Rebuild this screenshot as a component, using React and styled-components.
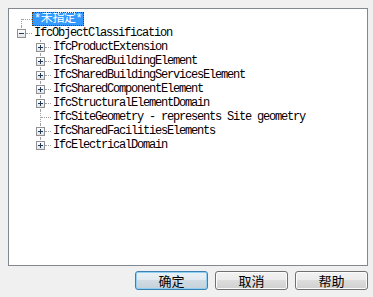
import React from 'react';
import styled, { createGlobalStyle } from 'styled-components';

const GlobalStyle = createGlobalStyle`
  html, body {
    margin: 0;
    padding: 0;
    background: #f0f0f0;
  }
`;

const Dialog = styled.div`
  width: 373px;
  height: 297px;
  box-sizing: border-box;
  padding: 8px 5px 0 8px;
  background: #f0f0f0;
  display: flex;
  flex-direction: column;
`;

const TreeBox = styled.div`
  width: 360px;
  height: 258px;
  box-sizing: border-box;
  border: 1px solid #828790;
  background: #fff;
  padding: 3px 0 0 4px;
  overflow: hidden;
`;

const Row = styled.div`
  display: flex;
  align-items: center;
  height: 14px;
`;

const Spacer = styled.span`
  width: 19px;
  height: 14px;
  flex-shrink: 0;
`;

const Joint = styled.span`
  position: relative;
  width: 19px;
  height: 14px;
  flex-shrink: 0;
`;

const Vert = styled.span`
  position: absolute;
  left: 8px;
  width: 0;
  border-left: 1px dotted #a0a0a0;
  top: ${(p) => (p.pos === 'first' ? '7px' : '0')};
  height: ${(p) => (p.pos === 'last' ? '8px' : p.pos === 'first' ? '7px' : '14px')};
`;

const Horiz = styled.span`
  position: absolute;
  top: 7px;
  left: ${(p) => (p.box ? '13px' : '9px')};
  right: 0;
  height: 0;
  border-top: 1px dotted #a0a0a0;
`;

const Expander = styled.span`
  position: absolute;
  left: 4px;
  top: 3px;
  width: 9px;
  height: 9px;
  box-sizing: border-box;
  border: 1px solid #919191;
  background: linear-gradient(#ffffff, #e4e4e4);
  z-index: 1;

  &::before {
    content: '';
    position: absolute;
    left: 1px;
    top: 3px;
    width: 5px;
    height: 1px;
    background: #1e395b;
  }

  &::after {
    content: '';
    display: ${(p) => (p.open ? 'none' : 'block')};
    position: absolute;
    left: 3px;
    top: 1px;
    width: 1px;
    height: 5px;
    background: #1e395b;
  }
`;

const Label = styled.span`
  height: 14px;
  line-height: 14px;
  padding: 0 2px;
  box-sizing: border-box;
  white-space: nowrap;
  font-family: "Liberation Mono", "Noto Sans CJK SC", monospace;
  font-size: 12px;
  letter-spacing: ${(p) => (p.selected ? '-0.4px' : '-1.2px')};
  color: ${(p) => (p.selected ? '#fff' : '#000')};
  background: ${(p) => (p.selected ? '#3399ff' : 'transparent')};
  outline: ${(p) => (p.selected ? '1px dotted #6b3a00' : 'none')};
  outline-offset: -1px;
`;

const ButtonBar = styled.div`
  display: flex;
  justify-content: flex-end;
  gap: 7px;
  margin-top: 5px;
`;

const Button = styled.button`
  width: 73px;
  height: 19px;
  padding: 0;
  box-sizing: border-box;
  border: 1px solid ${(p) => (p.primary ? '#3c7fb1' : '#707070')};
  border-radius: 3px;
  background: ${(p) =>
    p.primary
      ? 'linear-gradient(#eaf2f7 0%, #e0e9ef 50%, #d0dbe3 50%, #c5d1da 100%)'
      : 'linear-gradient(#f2f2f2 0%, #ebebeb 50%, #dddddd 50%, #cfcfcf 100%)'};
  box-shadow: inset 0 0 0 1px ${(p) => (p.primary ? '#8fd0f3' : '#fcfcfc')};
  font-family: "Noto Sans CJK SC", sans-serif;
  font-size: 13px;
  line-height: 15px;
  color: #000;
`;

const rows = [
  { level: 0, label: '*未指定*', pos: 'first', selected: true },
  { level: 0, label: 'IfcObjectClassification', pos: 'last', box: 'minus' },
  { level: 1, label: 'IfcProductExtension', pos: 'mid', box: 'plus' },
  { level: 1, label: 'IfcSharedBuildingElement', pos: 'mid', box: 'plus' },
  { level: 1, label: 'IfcSharedBuildingServicesElement', pos: 'mid', box: 'plus' },
  { level: 1, label: 'IfcSharedComponentElement', pos: 'mid', box: 'plus' },
  { level: 1, label: 'IfcStructuralElementDomain', pos: 'mid', box: 'plus' },
  { level: 1, label: 'IfcSiteGeometry - represents Site geometry', pos: 'mid' },
  { level: 1, label: 'IfcSharedFacilitiesElements', pos: 'mid', box: 'plus' },
  { level: 1, label: 'IfcElectricalDomain', pos: 'last', box: 'plus' },
];

const App = () => {
  return (
    <>
      <GlobalStyle />
      <Dialog>
        <TreeBox>
          {rows.map((r, i) => (
            <Row key={i}>
              {r.level > 0 && <Spacer />}
              <Joint>
                <Vert pos={r.pos} />
                <Horiz box={!!r.box} />
                {r.box && <Expander open={r.box === 'minus'} />}
              </Joint>
              <Label selected={r.selected}>{r.label}</Label>
            </Row>
          ))}
        </TreeBox>
        <ButtonBar>
          <Button primary>确定</Button>
          <Button>取消</Button>
          <Button>帮助</Button>
        </ButtonBar>
      </Dialog>
    </>
  );
};

export default App;
